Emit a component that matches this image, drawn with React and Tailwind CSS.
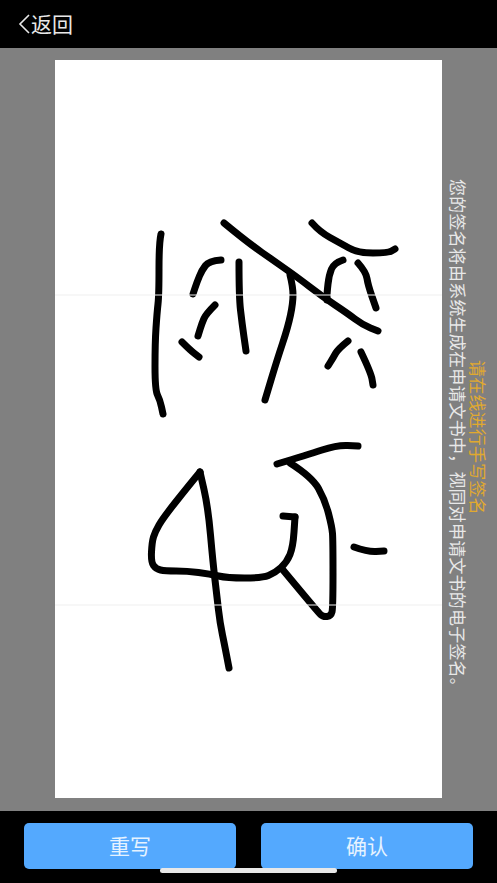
import React from "react";

// handwriting strokes, in page coordinates (see viewBox below)
const strokes = [
  "161,234 159,243 159,295 157,313 155,343 155,390 160,400 163,414",
  "221,260 209,261 202,270 197,282 193,294",
  "215,305 206,314 202,323 198,336",
  "182,342 190,350 199,357",
  "239,262 239,297 242,323 246,351",
  "224,223 247,242 277,263 297,277 323,297 347,313 363,325 378,331",
  "290,275 293,287 293,303 288,327 277,360 265,400",
  "312,223 320,232 340,243 358,253 388,253 395,249",
  "343,260 334,263 329,275 327,293 327,300",
  "358,263 366,272 368,285 376,308",
  "348,341 338,349 333,358 328,366",
  "361,352 371,373 373,385",
  "229,668 225,647 220,623 217,597 213,563 208,507 200,472",
  "200,472 190,484 163,518 155,532 152,542 151,562 156,569 165,571 187,571 210,574 227,578 262,578 275,573 287,562 293,547 295,517",
  "295,517 283,516",
  "277,464 307,455 337,445 358,446",
  "290,463 312,477 325,500 332,527 333,540 333,608 331,616 323,617 318,612 283,570",
  "354,547 368,552 384,551",
];

// rounds the corners of a stroke by curving through segment midpoints
const smooth = (points) => {
  const pts = points.split(" ").map((p) => p.split(",").map(Number));
  let d = `M${pts[0][0]} ${pts[0][1]}`;
  for (let i = 1; i < pts.length - 1; i++) {
    const mx = (pts[i][0] + pts[i + 1][0]) / 2;
    const my = (pts[i][1] + pts[i + 1][1]) / 2;
    d += ` Q${pts[i][0]} ${pts[i][1]} ${mx} ${my}`;
  }
  const last = pts[pts.length - 1];
  return `${d} L${last[0]} ${last[1]}`;
};

const App = () => {
  return (
    <div className="relative flex h-[883px] w-[497px] flex-col overflow-hidden bg-black font-['Noto_Sans_CJK_SC',sans-serif]">
      {/* Header */}
      <div className="flex h-12 items-center pb-px pl-[18px] text-[#e8e8e8]">
        <svg width="12" height="20" viewBox="0 0 12 20" fill="none" stroke="currentColor" strokeWidth="1.6">
          <path d="M11 1 L2 10 L11 19" />
        </svg>
        <span className="ml-px text-[21px] leading-none">返回</span>
      </div>

      {/* Signature area */}
      <div className="flex flex-1 bg-[#808080] pl-[55px] pt-3 pb-[13px]">
        <div className="w-[387px] bg-white">
          <svg className="block h-full w-full" viewBox="55 60 387 738">
            {strokes.map((points) => (
              <path
                key={points}
                d={smooth(points)}
                fill="none"
                stroke="#000"
                strokeWidth="7"
                strokeLinecap="round"
                strokeLinejoin="round"
              />
            ))}
            <line x1="55" y1="295" x2="442" y2="295" stroke="#efefef" strokeWidth="1" />
            <line x1="55" y1="605" x2="442" y2="605" stroke="#efefef" strokeWidth="1" />
          </svg>
        </div>
        <div className="flex flex-1 items-center justify-center pt-4 pr-1">
          <p className="text-center text-[17px] leading-[20px] tracking-[0.2px] text-[#e8e8e8] [writing-mode:vertical-rl] [text-orientation:sideways]">
            <span className="block text-[#e0a92f]">请在线进行手写签名</span>
            <span className="block">您的签名将由系统生成在申请文书中，视同对申请文书的电子签名。</span>
          </p>
        </div>
      </div>

      {/* Footer */}
      <div className="flex h-[72px] gap-[25px] px-6 pt-3">
        <button className="h-[46px] w-[212px] rounded-[5px] bg-[#54a9fe] text-[21px] text-[#e6f3ff]">重写</button>
        <button className="h-[46px] w-[212px] rounded-[5px] bg-[#54a9fe] text-[21px] text-[#e6f3ff]">确认</button>
      </div>

      {/* Home indicator */}
      <div className="absolute bottom-[10px] left-40 h-[5px] w-[177px] rounded-full bg-[#e8e8e8]" />
    </div>
  );
};

export default App;
